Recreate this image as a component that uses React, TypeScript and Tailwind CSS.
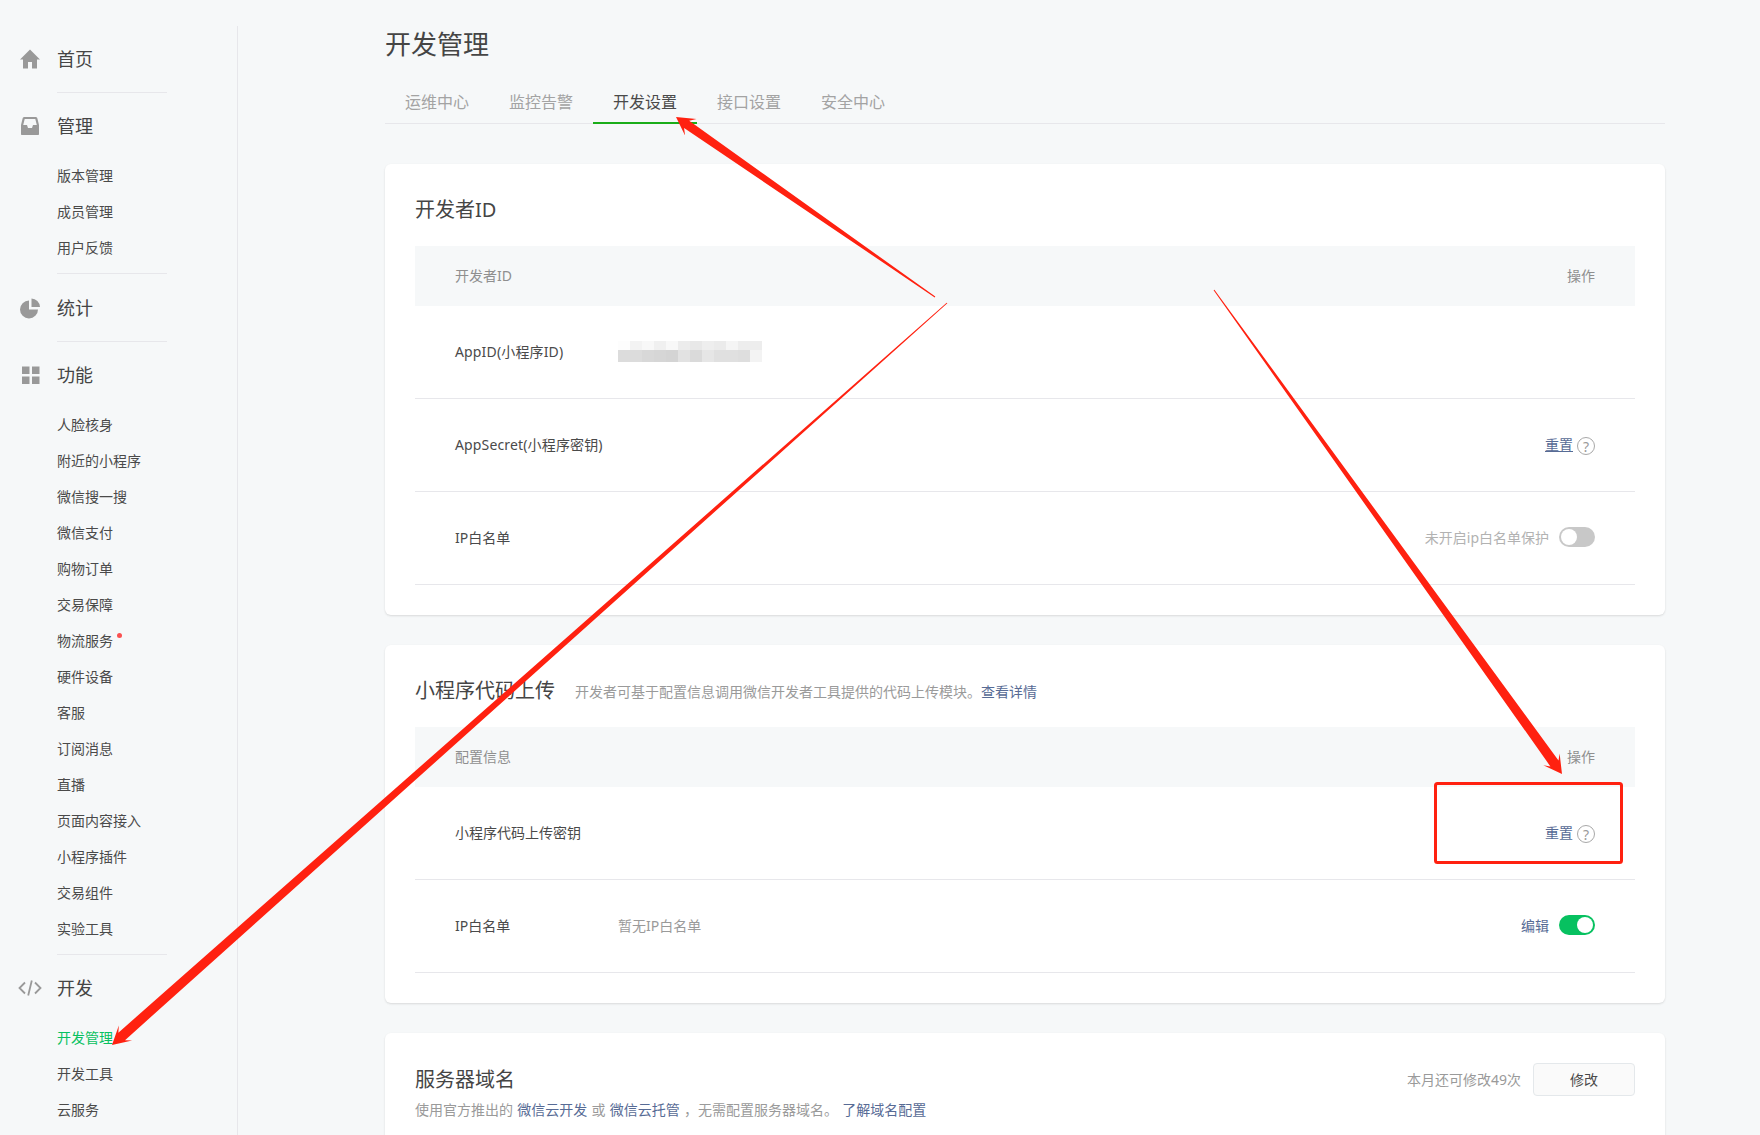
import type { ReactNode } from 'react';

const arrowPoints = (
  sx: number,
  sy: number,
  tx: number,
  ty: number,
  neckHalf: number,
  headLen: number,
  headHalf: number,
) => {
  const len = Math.hypot(tx - sx, ty - sy);
  const dx = (tx - sx) / len;
  const dy = (ty - sy) / len;
  const nx = -dy;
  const ny = dx;
  const neck = headLen * 0.72;
  const pt = (back: number, side: number) =>
    `${tx - dx * back + nx * side},${ty - dy * back + ny * side}`;
  return [
    `${sx + nx * 0.5},${sy + ny * 0.5}`,
    pt(neck, neckHalf),
    pt(headLen, headHalf),
    `${tx},${ty}`,
    pt(headLen, -headHalf),
    pt(neck, -neckHalf),
    `${sx - nx * 0.5},${sy - ny * 0.5}`,
  ].join(' ');
};

const HomeIcon = () => (
  <svg viewBox="0 0 24 24" className="h-6 w-6" fill="#999">
    <path d="M12 2.500 2 12.500h3v9h5v-6.500h4v6.500h5v-9h3z" />
  </svg>
);
const InboxIcon = () => (
  <svg viewBox="0 0 24 24" className="h-6 w-6" fill="#999">
    <path d="M6.500 3h11c1 0 1.600.6 1.900 1.400L21 11v9c0 .6-.4 1-1 1H4c-.6 0-1-.4-1-1v-9l1.600-6.600C4.900 3.600 5.500 3 6.500 3zm.2 2-1.500 6h3.800l1 3h4l1-3h3.800l-1.500-6z" />
  </svg>
);
const PieIcon = () => (
  <svg viewBox="0 0 24 24" className="h-6 w-6" fill="#999">
    <path d="M11 4.500v9h9A9 9 0 1 1 11 4.500z" />
    <path d="M13.500 2.500a9 9 0 0 1 8.500 8.500h-8.500z" />
  </svg>
);
const GridIcon = () => (
  <svg viewBox="0 0 24 24" className="h-6 w-6" fill="#999">
    <rect x="4" y="3.500" width="7.500" height="7.500" />
    <rect x="14" y="3.500" width="7.500" height="7.500" />
    <rect x="4" y="13.500" width="7.500" height="7.500" />
    <rect x="14" y="13.500" width="7.500" height="7.500" />
  </svg>
);
const CodeIcon = () => (
  <svg viewBox="0 0 24 24" className="h-6 w-6" fill="none" stroke="#999" strokeWidth="1.800">
    <path d="M7 6.500 1.500 12 7 17.500M17 6.500l5.500 5.500-5.500 5.500M13.800 4.500 10.200 19.500" />
  </svg>
);

const nav = [
  { title: '首页', icon: <HomeIcon />, items: [] as string[] },
  { title: '管理', icon: <InboxIcon />, items: ['版本管理', '成员管理', '用户反馈'] },
  { title: '统计', icon: <PieIcon />, items: [] as string[] },
  {
    title: '功能',
    icon: <GridIcon />,
    items: [
      '人脸核身',
      '附近的小程序',
      '微信搜一搜',
      '微信支付',
      '购物订单',
      '交易保障',
      '物流服务',
      '硬件设备',
      '客服',
      '订阅消息',
      '直播',
      '页面内容接入',
      '小程序插件',
      '交易组件',
      '实验工具',
    ],
  },
  { title: '开发', icon: <CodeIcon />, items: ['开发管理', '开发工具', '云服务'] },
];

const tabs = ['运维中心', '监控告警', '开发设置', '接口设置', '安全中心'];

const mosaicTop = ['#fdfdfd', '#f3f3f3', '#f8f8f8', '#f0f0f0', '#f8f8f8', '#ececec', '#e8e8e8', '#eeeeee', '#ebebeb', '#f5f5f5', '#ededed', '#ededed'];
const mosaicBottom = ['#dcdcdc', '#dcdcdc', '#d8d8d8', '#d6d6d6', '#d4d4d4', '#e2e2e2', '#dadada', '#e6e6e6', '#e0e0e0', '#e0e0e0', '#dedede', '#f3f3f3'];

function Sidebar() {
  return (
    <aside className="mt-[26px] w-[238px] shrink-0 border-r border-[#e7e7eb] pl-[18px]">
      {nav.map((group, i) => (
        <div key={group.title} className={group.title === '统计' ? 'pt-px' : ''}>
          <div className="flex h-[66px] items-center gap-[15px] text-[18px] text-[#454545]">
            {group.icon}
            <span>{group.title}</span>
          </div>
          {group.items.length > 0 && (
            <ul className="-mt-[2px] mb-2 ml-[39px]">
              {group.items.map((item) => (
                <li
                  key={item}
                  className={`relative flex h-9 items-center text-[14px] ${item === '开发管理' ? 'text-[#07c160]' : 'text-[#4a4a4a]'}`}
                >
                  {item}
                  {item === '物流服务' && (
                    <span className="absolute left-[60px] top-[11px] h-[5px] w-[5px] rounded-full bg-[#fa5151]" />
                  )}
                </li>
              ))}
            </ul>
          )}
          {i < nav.length - 1 && <div className="ml-[39px] h-px w-[110px] bg-[#e7e7eb]" />}
        </div>
      ))}
    </aside>
  );
}

function Toggle({ on }: { on?: boolean }) {
  return (
    <span
      className={`flex h-5 w-9 items-center rounded-full p-[2px] ${on ? 'justify-end bg-[#07c160]' : 'justify-start bg-[#c8c8c8]'}`}
    >
      <span className="h-4 w-4 rounded-full bg-white" />
    </span>
  );
}

function Help() {
  return (
    <span className="mt-1 flex h-[18px] w-[18px] items-center justify-center rounded-full border border-[#a8a8a8] text-[14px] text-[#9a9a9a]">
      ?
    </span>
  );
}

function Reset({ underline }: { underline?: boolean }) {
  return (
    <div className="flex items-center gap-1">
      <span className={`text-[#576b95] ${underline ? 'underline' : ''}`}>重置</span>
      <Help />
    </div>
  );
}

function TableHead({ left }: { left: string }) {
  return (
    <div className="flex h-[60px] items-center justify-between bg-[#f6f8f9] px-10 pb-px text-[#8f8f8f]">
      <span>{left}</span>
      <span>操作</span>
    </div>
  );
}

function Row({ label, value, action }: { label: string; value?: ReactNode; action?: ReactNode }) {
  return (
    <div className="flex h-[93px] items-center border-b border-[#e7e7eb] px-10 pb-[2px] text-[#4a4a4a]">
      <div className={`w-[163px] shrink-0 ${label.startsWith('App') ? 'tracking-[0.15px]' : ''}`}>{label}</div>
      <div className="flex-1">{value}</div>
      <div className="flex items-center gap-[10px]">{action}</div>
    </div>
  );
}

function Mosaic() {
  return (
    <div className="w-[144px]">
      <div className="flex h-[9px]">
        {mosaicTop.map((c, i) => (
          <span key={i} className="h-full w-3" style={{ backgroundColor: c }} />
        ))}
      </div>
      <div className="flex h-3">
        {mosaicBottom.map((c, i) => (
          <span key={i} className="h-full w-3" style={{ backgroundColor: c }} />
        ))}
      </div>
    </div>
  );
}

function Card({ children }: { children: ReactNode }) {
  return (
    <section className="mb-[30px] rounded-md bg-white px-[30px] pb-[30px] pt-[26px] shadow-[0_1px_2px_rgba(150,150,150,0.3)]">
      {children}
    </section>
  );
}

export default function App() {
  return (
    <div className="relative flex h-[1135px] w-[1760px] overflow-hidden bg-[#f6f8f9] font-['Noto_Sans','Noto_Sans_CJK_SC',sans-serif] text-[14px]">
      <Sidebar />

      <main className="ml-[147px] w-[1280px] shrink-0 pt-6">
        <h1 className="h-10 text-[26px] leading-10 text-[#454545]">开发管理</h1>
        <div className="mt-[19px] flex h-[41px] border-b border-[#e7e7eb] text-[16px]">
          {tabs.map((tab) => (
            <div
              key={tab}
              className={`flex h-[41px] items-center border-b-2 px-5 pb-px ${tab === '开发设置' ? 'border-[#1aad19] text-[#4a4a4a]' : 'border-transparent text-[#a3a3a3]'}`}
            >
              {tab}
            </div>
          ))}
        </div>

        <div className="mt-10">
          <Card>
            <h2 className="mb-4 h-10 text-[20px] leading-10 text-[#454545]">开发者ID</h2>
            <TableHead left="开发者ID" />
            <Row label="AppID(小程序ID)" value={<Mosaic />} />
            <Row label="AppSecret(小程序密钥)" action={<Reset underline />} />
            <Row
              label="IP白名单"
              action={
                <>
                  <span className="text-[#b2b2b2]">未开启ip白名单保护</span>
                  <Toggle />
                </>
              }
            />
          </Card>

          <Card>
            <div className="mb-4 flex h-10 items-center gap-5">
              <h2 className="text-[20px] text-[#454545]">小程序代码上传</h2>
              <p className="mt-px text-[#9a9a9a]">
                开发者可基于配置信息调用微信开发者工具提供的代码上传模块。<span className="text-[#576b95]">查看详情</span>
              </p>
            </div>
            <TableHead left="配置信息" />
            <Row label="小程序代码上传密钥" action={<Reset />} />
            <Row
              label="IP白名单"
              value={<span className="text-[#9a9a9a]">暂无IP白名单</span>}
              action={
                <>
                  <span className="text-[#576b95]">编辑</span>
                  <Toggle on />
                </>
              }
            />
          </Card>

          <Card>
            <div className="flex h-10 items-center justify-between">
              <h2 className="mt-px text-[20px] text-[#454545]">服务器域名</h2>
              <div className="flex items-center gap-3">
                <span className="text-[#9a9a9a]">本月还可修改49次</span>
                <button className="h-[33px] w-[102px] rounded-sm border border-[#e4e8eb] bg-[#fafafa] text-[#4a4a4a]">修改</button>
              </div>
            </div>
            <p className="text-[#9a9a9a] [word-spacing:0.6px]">
              使用官方推出的 <span className="text-[#576b95]">微信云开发</span> 或{' '}
              <span className="text-[#576b95]">微信云托管</span> ，无需配置服务器域名。{' '}
              <span className="text-[#576b95]">了解域名配置</span>
            </p>
          </Card>
        </div>
      </main>

      {/* annotations drawn over the page */}
      <svg className="pointer-events-none absolute inset-0 h-full w-full" viewBox="0 0 1760 1135">
        <polygon points={arrowPoints(935, 297, 676, 117, 4.500, 18, 10)} fill="#ff2110" />
        <polygon points={arrowPoints(947, 303, 112, 1045, 5, 18, 10)} fill="#ff2110" />
        <polygon points={arrowPoints(1214, 290, 1562, 774, 5, 18, 10)} fill="#ff2110" />
        <rect x="1435.500" y="783.500" width="186" height="79" rx="2" fill="none" stroke="#ff2110" strokeWidth="3" />
      </svg>
    </div>
  );
}
